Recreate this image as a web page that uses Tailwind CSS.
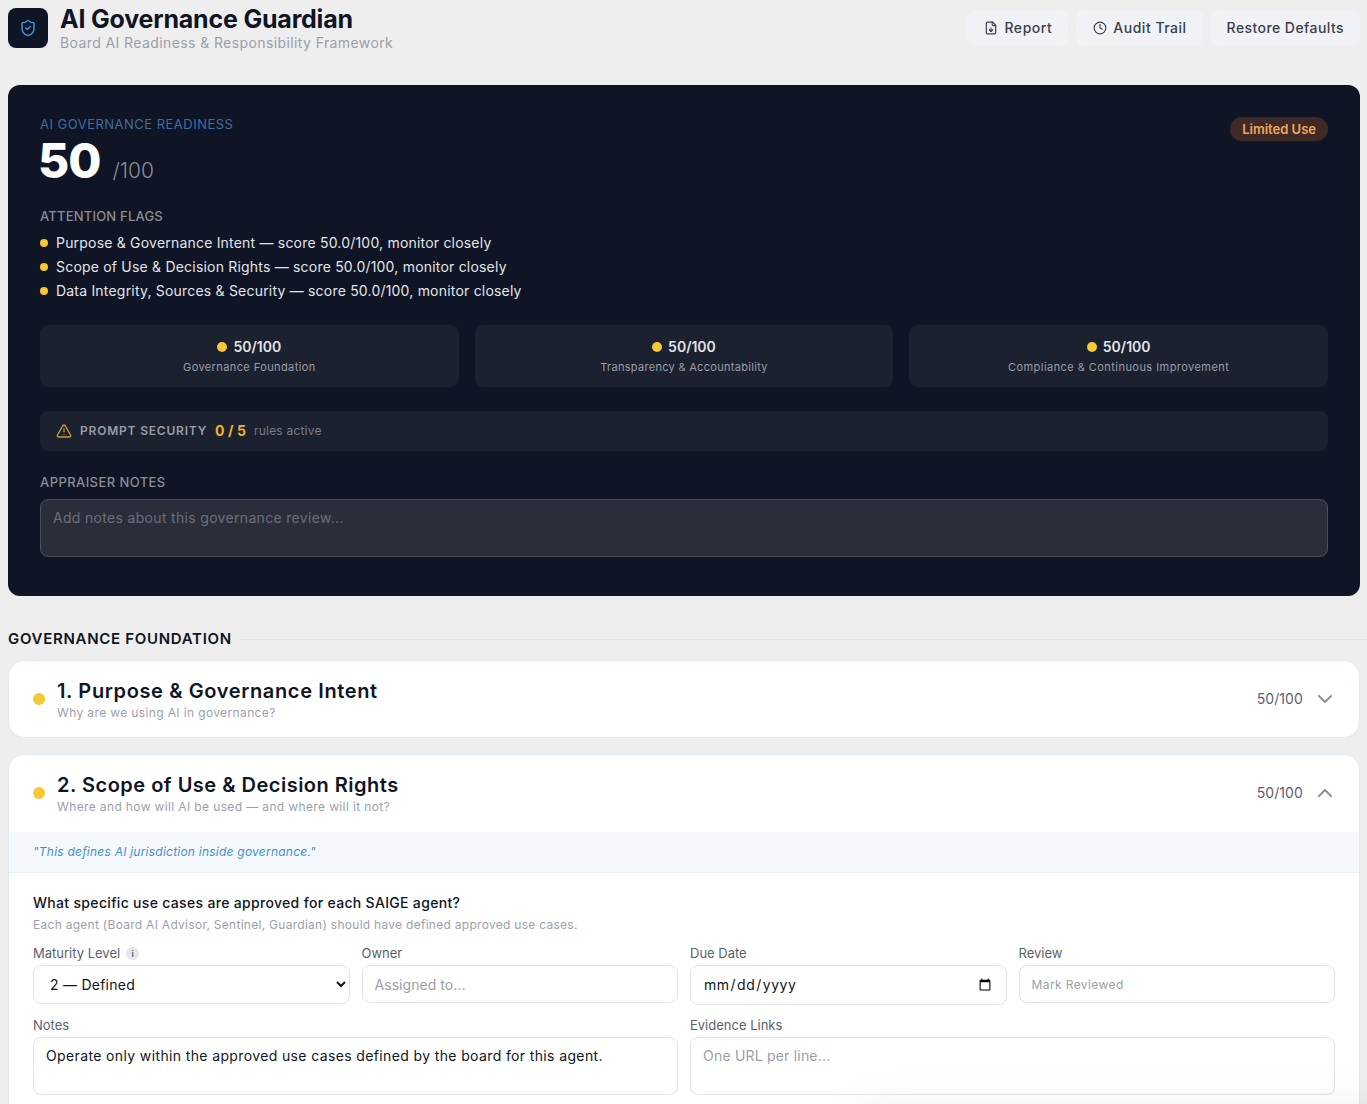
<!DOCTYPE html>
<html lang="en">
<head>
<meta charset="UTF-8">
<meta name="viewport" content="width=device-width, initial-scale=1.0">
<title>AI Governance Guardian</title>
<script src="https://cdn.jsdelivr.net/npm/@tailwindcss/browser@4"></script>
</head>
<body class="bg-[#eeeeee] font-['Inter',sans-serif] text-[#0f1525] h-[1104px] overflow-hidden relative">
  <!-- header -->
  <header class="flex justify-between items-start h-[85px] pl-2 pr-[7px]">
    <div class="flex gap-3">
      <div class="w-10 h-10 mt-2 rounded-lg bg-[#0f1525] flex items-center justify-center">
        <svg class="w-[18px] h-[18px] text-[#3f8fd8]" viewBox="0 0 24 24" fill="none" stroke="currentColor" stroke-width="2" stroke-linecap="round" stroke-linejoin="round"><path d="M20 13c0 5-3.5 7.5-7.66 8.95a1 1 0 0 1-.67-.01C7.5 20.5 4 18 4 13V6a1 1 0 0 1 1-1c2 0 4.5-1.2 6.24-2.72a1.17 1.17 0 0 1 1.52 0C14.51 3.81 17 5 19 5a1 1 0 0 1 1 1z"/><path d="m9 12 2 2 4-4"/></svg>
      </div>
      <div>
        <h1 class="text-[25px] leading-[38px] font-bold tracking-[-0.2px]">AI Governance Guardian</h1>
        <p class="text-sm leading-[10px] text-[#9a9fac] tracking-[0.4px]">Board AI Readiness &amp; Responsibility Framework</p>
      </div>
    </div>
    <div class="flex gap-2 mt-2.5 text-sm font-medium text-[#3a3f4e]">
      <button class="h-9 pl-[17px] pr-4 rounded-lg bg-[#f1f2f5] flex items-center gap-1.5 tracking-[0.55px]">
        <svg class="w-3.5 h-3.5" viewBox="0 0 24 24" fill="none" stroke="currentColor" stroke-width="2" stroke-linecap="round" stroke-linejoin="round"><path d="M15 2H6a2 2 0 0 0-2 2v16a2 2 0 0 0 2 2h12a2 2 0 0 0 2-2V7z"/><path d="M14 2v4a2 2 0 0 0 2 2h4"/><path d="M12 12v6"/><path d="m15 15-3 3-3-3"/></svg>
        Report
      </button>
      <button class="h-9 pl-[17px] pr-4 rounded-lg bg-[#f1f2f5] flex items-center gap-1.5 tracking-[0.5px]">
        <svg class="w-3.5 h-3.5" viewBox="0 0 24 24" fill="none" stroke="currentColor" stroke-width="2" stroke-linecap="round" stroke-linejoin="round"><circle cx="12" cy="12" r="10"/><path d="M12 6v6l4 2"/></svg>
        Audit Trail
      </button>
      <button class="h-9 px-4 rounded-lg bg-[#f1f2f5] tracking-[0.43px]">Restore Defaults</button>
    </div>
  </header>

  <!-- readiness panel -->
  <section class="mx-2 w-[1352px] h-[511px] rounded-xl bg-[#0f1525] px-8 pt-[31px] text-white">
    <div class="flex justify-between items-start">
      <div>
        <p class="text-[13px] leading-4 text-[#3b6fa0] tracking-[0.48px]">AI GOVERNANCE READINESS</p>
        <div class="flex items-baseline gap-3 h-[46px] mt-[6px] -ml-0.5">
          <span class="text-5xl leading-[46px] font-extrabold tracking-[-1px]">50</span>
          <span class="text-[21px] leading-[46px] text-[#8a8d96] font-light">/100</span>
        </div>
      </div>
      <span class="mt-px h-6 px-3 rounded-full bg-[#3f2a28] text-[#eea85c] text-[13px] font-semibold leading-6">Limited Use</span>
    </div>

    <p class="mt-[24px] text-[13px] leading-4 font-medium text-[#8a8d96] tracking-[0.2px]">ATTENTION FLAGS</p>
    <ul class="mt-[7px] text-sm leading-6 text-[#e3e4e7] tracking-[0.2px]">
      <li class="flex items-center gap-2"><span class="w-2 h-2 rounded-full bg-[#f4c935]"></span>Purpose &amp; Governance Intent — score 50.0/100, monitor closely</li>
      <li class="flex items-center gap-2"><span class="w-2 h-2 rounded-full bg-[#f4c935]"></span>Scope of Use &amp; Decision Rights — score 50.0/100, monitor closely</li>
      <li class="flex items-center gap-2"><span class="w-2 h-2 rounded-full bg-[#f4c935]"></span>Data Integrity, Sources &amp; Security — score 50.0/100, monitor closely</li>
    </ul>

    <div class="mt-[22px] grid grid-cols-3 gap-4">
      <div class="h-[62px] rounded-lg bg-[#1c2130] flex flex-col items-center justify-center gap-0.5">
        <div class="flex items-center gap-1.5 text-sm leading-5 font-semibold text-[#e3e4e7]"><span class="w-2.5 h-2.5 rounded-full bg-[#f4c935]"></span>50/100</div>
        <div class="text-[11px] leading-4 text-[#9a9da6] tracking-[0.4px]">Governance Foundation</div>
      </div>
      <div class="h-[62px] rounded-lg bg-[#1c2130] flex flex-col items-center justify-center gap-0.5">
        <div class="flex items-center gap-1.5 text-sm leading-5 font-semibold text-[#e3e4e7]"><span class="w-2.5 h-2.5 rounded-full bg-[#f4c935]"></span>50/100</div>
        <div class="text-[11px] leading-4 text-[#9a9da6] tracking-[0.3px]">Transparency &amp; Accountability</div>
      </div>
      <div class="h-[62px] rounded-lg bg-[#1c2130] flex flex-col items-center justify-center gap-0.5">
        <div class="flex items-center gap-1.5 text-sm leading-5 font-semibold text-[#e3e4e7]"><span class="w-2.5 h-2.5 rounded-full bg-[#f4c935]"></span>50/100</div>
        <div class="text-[11px] leading-4 text-[#9a9da6] tracking-[0.45px]">Compliance &amp; Continuous Improvement</div>
      </div>
    </div>

    <div class="mt-6 h-10 rounded-lg bg-[#1c2130] flex items-center px-4">
      <svg class="w-4 h-4 text-[#c99a2e]" viewBox="0 0 24 24" fill="none" stroke="currentColor" stroke-width="2" stroke-linecap="round" stroke-linejoin="round"><path d="m21.73 18-8-14a2 2 0 0 0-3.48 0l-8 14A2 2 0 0 0 4 21h16a2 2 0 0 0 1.73-3"/><path d="M12 9v4"/><path d="M12 17h.01"/></svg>
      <span class="ml-2 text-xs font-semibold text-[#9a9da6] tracking-[0.8px]">PROMPT SECURITY</span>
      <span class="ml-2 text-sm font-bold text-[#f0b429] tracking-[0.1px]">0 / 5</span>
      <span class="ml-2 text-xs text-[#777b85] tracking-[0.2px]">rules active</span>
    </div>

    <p class="mt-[23px] text-[13px] leading-4 font-medium text-[#8a8d96] tracking-[0.42px]">APPRAISER NOTES</p>
    <textarea class="block mt-[9px] w-full h-[58px] resize-none rounded-lg border border-[#4a4e5c] bg-[#2a2e3b] px-3 py-2 text-sm leading-5 tracking-[0.32px] placeholder:text-[#6b6f7b] outline-none" placeholder="Add notes about this governance review..."></textarea>
  </section>

  <!-- section title -->
  <div class="mt-[34px] pl-2 flex items-center gap-2 h-[18px]">
    <h2 class="text-[15px] font-semibold tracking-[0.7px] whitespace-nowrap">GOVERNANCE FOUNDATION</h2>
    <div class="flex-1 h-px bg-[#e2e4ea]"></div>
  </div>

  <!-- pillar cards -->
  <div class="mx-2 w-[1352px] mt-[12px] h-[78px] rounded-2xl bg-white border border-[#dfe9f5] flex items-center pl-6 pr-[22px]">
    <span class="w-3 h-3 rounded-full bg-[#f4c935]"></span>
    <div class="ml-3 mt-0.5 flex-1">
      <h3 class="text-xl leading-6 font-semibold tracking-[0.63px]">1. Purpose &amp; Governance Intent</h3>
      <p class="mt-0.5 text-xs leading-4 text-[#9a9fac] tracking-[0.37px]">Why are we using AI in governance?</p>
    </div>
    <span class="text-sm text-[#5a5f6e] tracking-[0.1px]">50/100</span>
    <svg class="ml-2.5 w-6 h-6 text-[#8a8f9c]" viewBox="0 0 24 24" fill="none" stroke="currentColor" stroke-width="2" stroke-linecap="round" stroke-linejoin="round"><path d="m6 9 6 6 6-6"/></svg>
  </div>

  <div class="mx-2 w-[1352px] mt-4 rounded-t-2xl bg-white border border-b-0 border-[#dfe9f5] h-[400px]">
    <div class="h-[75px] mb-0.5 flex items-center pl-6 pr-[22px]">
      <span class="w-3 h-3 rounded-full bg-[#f4c935]"></span>
      <div class="ml-3 mt-0.5 flex-1">
        <h3 class="text-xl leading-6 font-semibold tracking-[0.5px]">2. Scope of Use &amp; Decision Rights</h3>
        <p class="mt-0.5 text-xs leading-4 text-[#9a9fac] tracking-[0.37px]">Where and how will AI be used — and where will it not?</p>
      </div>
      <span class="text-sm text-[#5a5f6e] tracking-[0.1px]">50/100</span>
      <svg class="ml-2.5 w-6 h-6 text-[#8a8f9c]" viewBox="0 0 24 24" fill="none" stroke="currentColor" stroke-width="2" stroke-linecap="round" stroke-linejoin="round"><path d="m18 15-6-6-6 6"/></svg>
    </div>
    <div class="h-[41px] bg-[#f5f9fd] border-b border-[#eceef2] flex items-center pl-6 text-xs italic text-[#3f8fd0] tracking-[0.23px]">"This defines AI jurisdiction inside governance."</div>
    <div class="px-6 pt-5">
      <p class="text-sm leading-5 font-medium tracking-[0.32px]">What specific use cases are approved for each SAIGE agent?</p>
      <p class="mt-1 text-xs leading-4 text-[#9a9fac] tracking-[0.28px]">Each agent (Board AI Advisor, Sentinel, Guardian) should have defined approved use cases.</p>
      <div class="mt-[12px] grid grid-cols-4 gap-x-3 text-[#5a5f6e] text-[13px] leading-4">
        <div>
          <label class="flex items-center gap-1.5 h-[16px]">Maturity Level <span class="w-[13px] h-[13px] rounded-full bg-[#e4e6eb] text-[9px] leading-[13px] text-center font-semibold">i</span></label>
          <select class="block mt-[4px] w-full h-[39px] rounded-lg border border-[#e2e4ea] bg-white px-3 text-sm tracking-[0.25px] text-[#0f1525] outline-none"><option>2 — Defined</option></select>
        </div>
        <div>
          <label class="block h-[16px]">Owner</label>
          <input class="block mt-[4px] w-full h-[38px] rounded-lg border border-[#e2e4ea] px-3 text-sm tracking-[0.05px] placeholder:text-[#9a9fac] outline-none" placeholder="Assigned to...">
        </div>
        <div>
          <label class="block h-[16px]">Due Date</label>
          <input type="date" class="block mt-[4px] w-full h-[40px] rounded-lg border border-[#e2e4ea] px-3 text-sm tracking-[0.5px] text-[#0f1525] outline-none">
        </div>
        <div>
          <label class="block h-[16px]">Review</label>
          <button class="block mt-[4px] w-full h-[38px] rounded-lg border border-[#e2e4ea] px-3 pt-px text-left text-xs tracking-[0.4px] text-[#9a9fac]">Mark Reviewed</button>
        </div>
        <div class="col-span-2 mt-[12px]">
          <label class="block h-[16px]">Notes</label>
          <textarea class="block mt-[4px] w-full h-[58px] resize-none rounded-lg border border-[#e2e4ea] px-3 py-2 text-sm leading-5 tracking-[0.37px] text-[#0f1525] outline-none">Operate only within the approved use cases defined by the board for this agent.</textarea>
        </div>
        <div class="col-span-2 mt-[12px]">
          <label class="block h-[16px]">Evidence Links</label>
          <textarea class="block mt-[4px] w-full h-[58px] resize-none rounded-lg border border-[#e2e4ea] px-3 py-2 text-sm leading-5 tracking-[0.2px] placeholder:text-[#9a9fac] outline-none" placeholder="One URL per line..."></textarea>
        </div>
      </div>
    </div>
  </div>

  <!-- floating element just below the fold, only its shadow shows -->
  <div class="fixed left-[880px] -right-[20px] top-[1130px] h-20 shadow-[0_0_50px_20px_rgba(0,0,0,0.08)]"></div>
</body>
</html>
